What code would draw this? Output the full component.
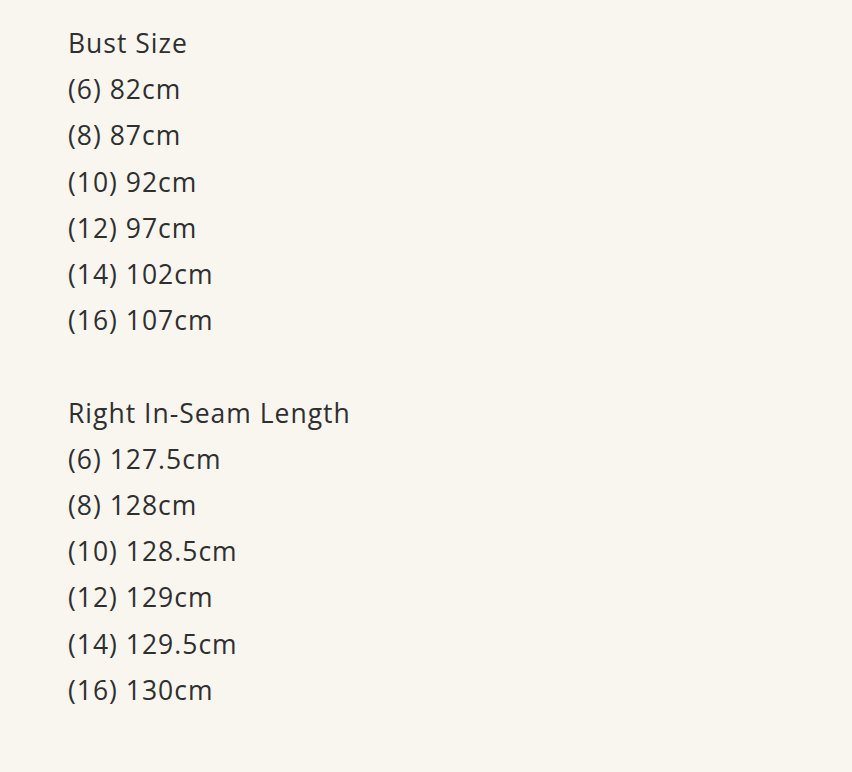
const bust = ['(6) 82cm', '(8) 87cm', '(10) 92cm', '(12) 97cm', '(14) 102cm', '(16) 107cm']
const seam = ['(6) 127.5cm', '(8) 128cm', '(10) 128.5cm', '(12) 129cm', '(14) 129.5cm', '(16) 130cm']

const Block = ({ title, items }) => (
	<div>
		<p>{title}</p>
		{items.map((item) => (
			<p key={item}>{item}</p>
		))}
	</div>
)

export default function App() {
	return (
		<div className="min-h-screen bg-[#f9f6f0] px-[68px] pt-[20px] font-['Open_Sans',sans-serif] text-[26.5px] leading-[46.2px] tracking-[1px] text-[#2f2f2f]">
			<Block title="Bust Size" items={bust} />
			<div className="h-[46.2px]" />
			<Block title="Right In-Seam Length" items={seam} />
		</div>
	)
}
